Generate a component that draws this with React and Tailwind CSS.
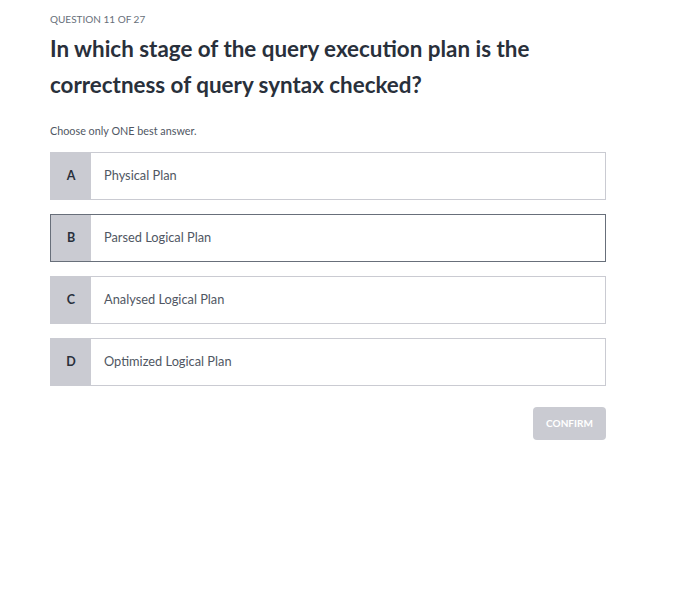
import React, { useState } from "react";

const options = [
  { key: "A", label: "Physical Plan" },
  { key: "B", label: "Parsed Logical Plan" },
  { key: "C", label: "Analysed Logical Plan" },
  { key: "D", label: "Optimized Logical Plan" },
];

const App = () => {
  const [selected] = useState("B");

  return (
    <div
      className="min-h-[610px] bg-white pl-[50px] pr-[79px] pt-[12px]"
      style={{ fontFamily: "Lato, 'Open Sans', sans-serif" }}
    >
      <div className="text-[10px] leading-[14px] text-[#686f7a] uppercase">Question 11 of 27</div>

      <h1 className="mt-[5px] text-[22.4px] leading-[36px] font-bold text-[#29303b]">
        In which stage of the query execution plan is the correctness of query syntax checked?
      </h1>

      <p className="mt-[20px] text-[10.8px] leading-[16px] text-[#505763]">Choose only ONE best answer.</p>

      <div className="mt-[13px] flex flex-col gap-[14px]">
        {options.map((opt) => (
          <div
            key={opt.key}
            className={`flex h-[48px] border ${
              selected === opt.key ? "border-[#686f7a]" : "border-[#cacbd2]"
            } bg-white`}
          >
            <div className="flex w-[40px] items-center justify-center bg-[#cacbd2] text-[12.5px] font-bold text-[#29303b]">
              {opt.key}
            </div>
            <div className="flex items-center pl-[13px] text-[12.8px] text-[#505763]">{opt.label}</div>
          </div>
        ))}
      </div>

      <div className="mt-[21px] flex justify-end">
        <button
          disabled
          className="h-[33px] w-[73px] rounded-[4px] bg-[#cacbd2] text-[10px] font-bold uppercase text-white"
        >
          Confirm
        </button>
      </div>
    </div>
  );
};

export default App;
